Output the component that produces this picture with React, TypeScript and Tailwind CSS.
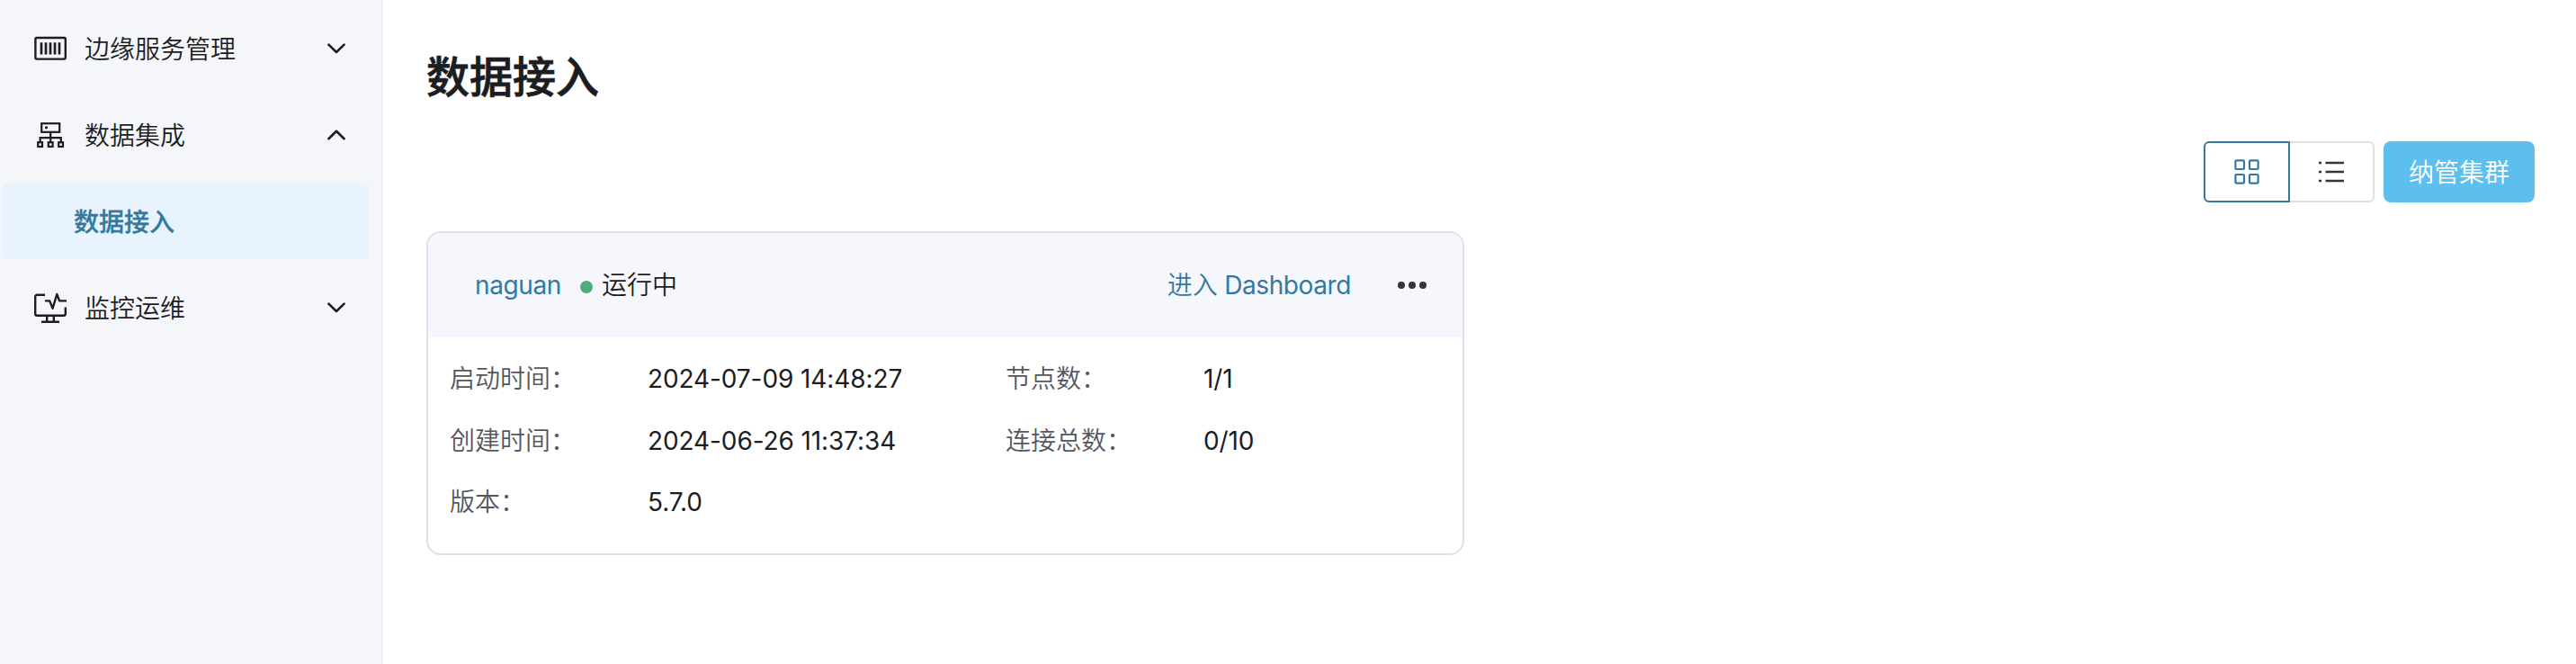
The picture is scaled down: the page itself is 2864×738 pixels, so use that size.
import React from "react";

function EdgeIcon() {
  return (
    <svg width="36" height="36" viewBox="0 0 36 36" fill="none" stroke="currentColor">
      <rect x="1.4" y="6" width="33.4" height="23.6" rx="1.5" strokeWidth="2.4" />
      <path d="M8 11.2v13.2M13 11.2v13.2M18 11.2v13.2M23 11.2v13.2M28 11.2v13.2" strokeWidth="2.7" />
    </svg>
  );
}

function IntegrationIcon() {
  return (
    <svg width="36" height="36" viewBox="0 0 36 36" fill="none" stroke="currentColor" strokeWidth="2.2">
      <rect x="8.2" y="5.2" width="20" height="9.6" />
      <path d="M18.2 15v12M6.6 27v-5.8h23.2V27" />
      <rect x="4.2" y="26.2" width="4.8" height="4.8" />
      <rect x="15.8" y="26.2" width="4.8" height="4.8" />
      <rect x="27.2" y="26.2" width="4.8" height="4.8" />
      <circle cx="13.5" cy="9.8" r="1.6" fill="currentColor" stroke="none" />
    </svg>
  );
}

function MonitorIcon() {
  return (
    <svg width="36" height="36" viewBox="0 0 36 36" fill="none" stroke="currentColor" strokeWidth="2.4">
      <path d="M12 3.7H3.2a2 2 0 0 0-2 2v19a2 2 0 0 0 2 2h29.6a2 2 0 0 0 2-2V17.5" />
      <path d="M12 10.4h5.2l3.3 8.4L25.3 3l2.8 7.4H36" strokeLinejoin="round" />
      <path d="M14.2 27v6M21.8 27v6M8 33.8h20" />
    </svg>
  );
}

function Chevron({ up = false }: { up?: boolean }) {
  return (
    <svg width="20" height="12" viewBox="0 0 20 12" fill="none" stroke="currentColor" strokeWidth="2.6" strokeLinecap="round" strokeLinejoin="round">
      <path d={up ? "M1.4 10.2 10 1.8l8.6 8.4" : "M1.4 1.6 10 10l8.6-8.4"} />
    </svg>
  );
}

function MenuItem({ icon, label, open }: { icon: React.ReactNode; label: string; open?: boolean }) {
  return (
    <div className="flex h-[84px] items-center pr-[40px] pl-[38px] text-[#1d1d1f]">
      {icon}
      <span className="ml-5 flex-1 pt-[2px] font-[350]">{label}</span>
      <Chevron up={open} />
    </div>
  );
}

function Field({ label, value }: { label: string; value: string }) {
  return (
    <div className="flex h-[68.6px] items-center">
      <span className="w-[220px] font-[350] text-[#55565f]">{label}：</span>
      <span className="tracking-[-0.1px] text-[#1d1d1f]">{value}</span>
    </div>
  );
}

export default function App() {
  return (
    <div className="flex h-[738px] w-full overflow-hidden bg-white font-['Inter','Noto_Sans_CJK_SC',sans-serif] text-[28px] leading-[40px]">
      <aside className="flex w-[426px] shrink-0 flex-col gap-3 border-r-2 border-[#efeff4] bg-[#f5f6fa] pt-3">
        <MenuItem icon={<EdgeIcon />} label="边缘服务管理" />
        <MenuItem icon={<IntegrationIcon />} label="数据集成" open />
        <div className="mr-[14px] ml-[2px] flex h-[84px] items-center rounded-md bg-[#e8f3fd] pt-[2px] pl-20 font-medium text-[#34799d] [-webkit-text-stroke:0.3px_currentColor]">
          数据接入
        </div>
        <MenuItem icon={<MonitorIcon />} label="监控运维" />
      </aside>

      <main className="flex-1 pr-[46px] pl-12">
        <h1 className="pt-[54px] text-[48px] leading-[64px] font-medium text-[#1d1d1f] [-webkit-text-stroke:0.8px_currentColor]">数据接入</h1>

        <div className="mt-[39px] flex justify-end">
          <div className="flex h-[68px]">
            <button className="flex w-24 items-center justify-center rounded-l-md border-2 border-[#34799d] text-[#34799d]">
              <svg width="28" height="28" viewBox="0 0 28 28" fill="none" stroke="currentColor" strokeWidth="2.2">
                <rect x="1.4" y="1.4" width="9.6" height="9.6" rx="1" />
                <rect x="17" y="1.4" width="9.6" height="9.6" rx="1" />
                <rect x="1.4" y="17" width="9.6" height="9.6" rx="1" />
                <rect x="17" y="17" width="9.6" height="9.6" rx="1" />
              </svg>
            </button>
            <button className="flex w-[94px] items-center justify-center rounded-r-md border-2 border-l-0 border-[#dfdfe6] text-[#35353b]">
              <svg width="28" height="28" viewBox="0 0 28 28" fill="none" stroke="currentColor" strokeWidth="2.4">
                <path d="M0 4h3M7.5 4H28M0 14h3M7.5 14H28M0 24h3M7.5 24H28" />
              </svg>
            </button>
          </div>
          <button className="ml-[10px] h-[68px] w-[168px] rounded-lg bg-[#5dbff0] pt-px font-[350] text-white">纳管集群</button>
        </div>

        <section className="mt-8 h-[360px] w-[1154px] overflow-hidden rounded-2xl border-2 border-[#dfdfe8]">
          <header className="flex h-[116px] items-center bg-[#f6f7fd] pr-[40px] pl-[52px]">
            <a className="tracking-[-0.4px] text-[#34799d]">naguan</a>
            <span className="mt-[3px] ml-[21px] size-[14px] rounded-full bg-[#4fae78]" />
            <span className="ml-[10px] font-[350] text-[#1d1d1f]">运行中</span>
            <a className="ml-auto text-[#34799d]">
              <span className="font-[350]">进入</span>
              <span className="tracking-[-0.4px]"> Dashboard</span>
            </a>
            <svg className="ml-[52px] text-[#333338]" width="32" height="8" viewBox="0 0 32 8" fill="currentColor">
              <circle cx="4" cy="4" r="4" />
              <circle cx="16" cy="4" r="4" />
              <circle cx="28" cy="4" r="4" />
            </svg>
          </header>
          <div className="grid grid-cols-[618px_1fr] pt-[12px] pl-6">
            <Field label="启动时间" value="2024-07-09 14:48:27" />
            <Field label="节点数" value="1/1" />
            <Field label="创建时间" value="2024-06-26 11:37:34" />
            <Field label="连接总数" value="0/10" />
            <Field label="版本" value="5.7.0" />
          </div>
        </section>
      </main>
    </div>
  );
}
